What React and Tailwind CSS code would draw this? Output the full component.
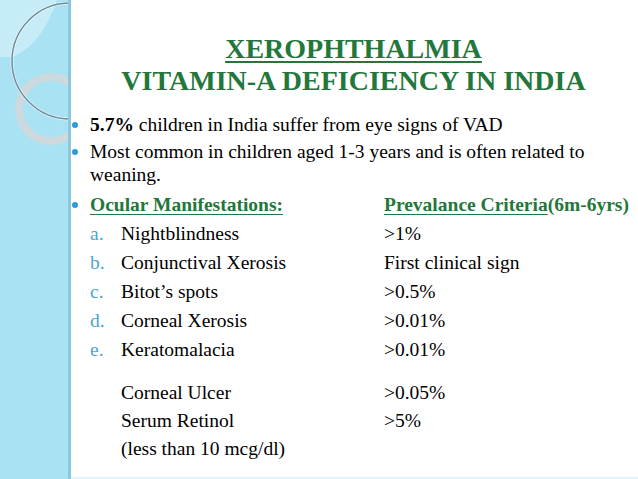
import React from 'react';

const GREEN = 'text-[#23773b]';

function Bullet() {
  return (
    <span className="w-[19px] shrink-0 flex pt-[9px] pl-[1px]">
      <span className="block w-[6px] h-[6px] rounded-full bg-[#2f9ad6]" />
    </span>
  );
}

function SideArt() {
  return (
    <svg width="68" height="479" viewBox="0 0 68 479" className="block">
      <path d="M0 0 L57 0 Q 42 44 13 57 L0 57 Z" fill="#ffffff" opacity="0.35" />
      <circle cx="51" cy="109" r="32" fill="none" stroke="#ccd9de" strokeWidth="8" />
      <circle cx="70" cy="61" r="58" fill="none" stroke="#ffffff" strokeWidth="3" opacity="0.7" />
      <circle cx="70" cy="61" r="58" fill="none" stroke="#6d8c9c" strokeWidth="1.5" />
    </svg>
  );
}

const rows = [
  ['a.', 'Nightblindness', '>1%'],
  ['b.', 'Conjunctival Xerosis', 'First clinical sign'],
  ['c.', 'Bitot’s spots', '>0.5%'],
  ['d.', 'Corneal Xerosis', '>0.01%'],
  ['e.', 'Keratomalacia', '>0.01%'],
];

const extra = [
  ['Corneal Ulcer', '>0.05%'],
  ['Serum Retinol', '>5%'],
  ['(less than 10 mcg/dl)', ''],
];

export default function App() {
  return (
    <div className="w-[638px] h-[479px] flex bg-white overflow-hidden font-['Liberation_Serif','Times_New_Roman',serif]">
      {/* Sidebar */}
      <div className="w-[71px] shrink-0 bg-[#a8e2f3] border-r-[3px] border-[#8dc7da]">
        <SideArt />
      </div>

      {/* Slide body */}
      <div className="flex-1 border-b-2 border-[#e2f4fa] text-black">
        {/* Title */}
        <div className={`pt-[33px] text-center font-bold text-[28px] leading-[32px] ${GREEN} pr-[2px]`}>
          <div className="underline decoration-2 underline-offset-[3px]">XEROPHTHALMIA</div>
          <div>VITAMIN-A DEFICIENCY IN INDIA</div>
        </div>

        <div className="mt-[16px] text-[19.5px] leading-[23px]">
          <div className="flex">
            <Bullet />
            <p>
              <b>5.7%</b> children in India suffer from eye signs of VAD
            </p>
          </div>
          <div className="flex mt-[4px]">
            <Bullet />
            <p className="pr-[30px]">
              Most common in children aged 1-3 years and is often related to weaning.
            </p>
          </div>
          <div className="flex mt-[7px]">
            <Bullet />
            <p className={`flex-1 flex font-bold whitespace-nowrap ${GREEN}`}>
              <span className="w-[294px] underline underline-offset-[3px]">Ocular Manifestations:</span>
              <span>
                <span className="underline underline-offset-[3px]">Prevalance Criteria</span>(6m-6yrs)
              </span>
            </p>
          </div>

          <div className="mt-[3px] leading-[29px]">
            {rows.map(([l, a, b]) => (
              <div key={l} className="flex pl-[19px]">
                <span className="w-[31px] text-[#4aa6d4]">{l}</span>
                <span className="w-[263px]">{a}</span>
                <span>{b}</span>
              </div>
            ))}
          </div>

          <div className="mt-[15px] leading-[28px]">
            {extra.map(([a, b]) => (
              <div key={a} className="flex pl-[50px]">
                <span className="w-[263px]">{a}</span>
                <span>{b}</span>
              </div>
            ))}
          </div>
        </div>
      </div>
    </div>
  );
}
